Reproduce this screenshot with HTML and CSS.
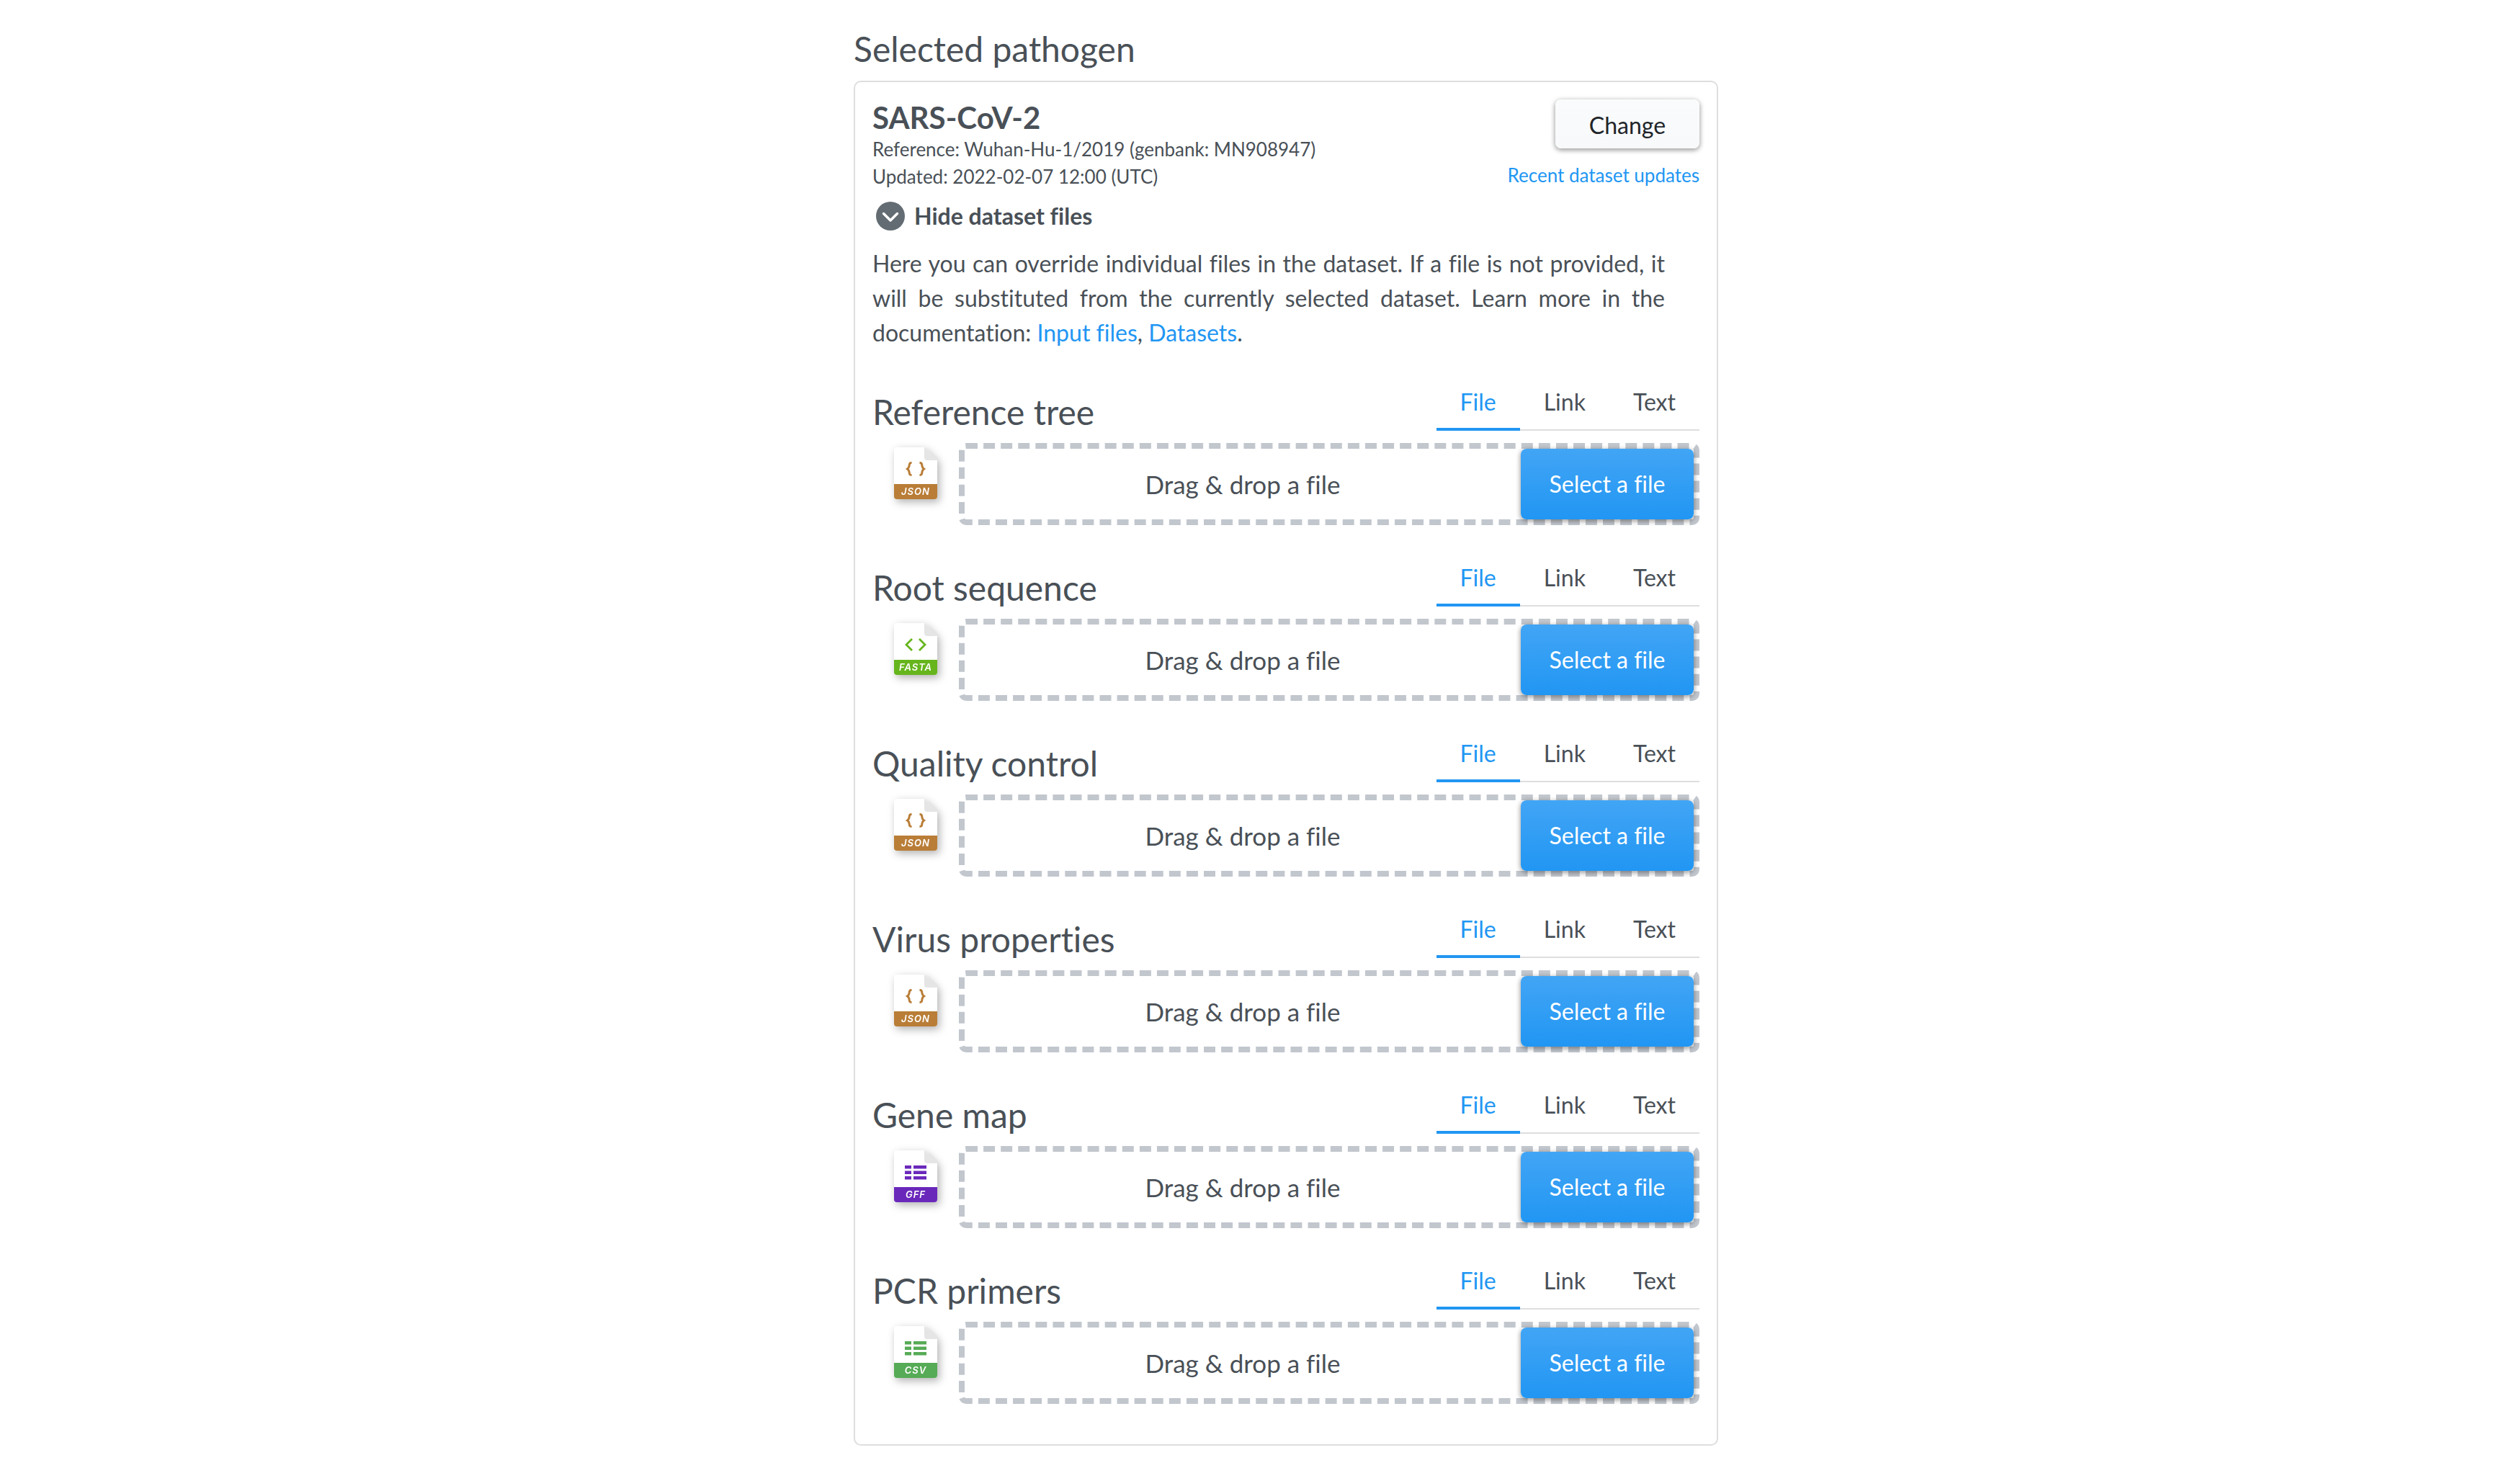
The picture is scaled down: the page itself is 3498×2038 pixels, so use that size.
FILE: index.html
```html
<!DOCTYPE html>
<html lang="en">
<head>
<meta charset="utf-8">
<title>Selected pathogen</title>
<link rel="stylesheet" href="styles.css">
<script src="app.js" defer></script>
</head>
<body>
<main class="page">
  <h1 class="page-title">Selected pathogen</h1>
  <section class="card">
    <header class="dataset">
      <div class="dataset-info">
        <h2 class="dataset-name">SARS-CoV-2</h2>
        <p class="dataset-meta">Reference: Wuhan-Hu-1/2019 (genbank: MN908947)</p>
        <p class="dataset-meta">Updated: 2022-02-07 12:00 (UTC)</p>
      </div>
      <div class="dataset-actions">
        <button type="button" class="btn-change">Change</button>
        <a class="updates-link" href="#updates">Recent dataset updates</a>
      </div>
    </header>
    <button type="button" class="toggle" aria-expanded="true">
      <svg class="toggle-icon" viewBox="0 0 40 40" aria-hidden="true"><circle cx="20" cy="20" r="20" fill="#636c73"/><path d="M10.500 16.500l9.500 9.500 9.500-9.500" fill="none" stroke="#fff" stroke-width="3.500" stroke-linecap="round" stroke-linejoin="round"/></svg>
      <span>Hide dataset files</span>
    </button>
    <p class="intro">Here you can override individual files in the dataset. If a file is not provided, it will be substituted from the currently selected dataset. Learn more in the documentation: <a href="#input-files">Input files</a>, <a href="#datasets">Datasets</a>.</p>
    <div class="inputs" id="inputs"></div>
  </section>
</main>
</body>
</html>
```
FILE: styles.css
```css
* {
  box-sizing: border-box;
}

body {
  margin: 0;
  background: #fff;
  color: #495057;
  font: 32px/48px Lato, "Liberation Sans", sans-serif;
  font-variant-ligatures: none;
}

h1, h2, h3, p {
  margin: 0;
}

a {
  color: #2196f3;
  text-decoration: none;
}

button {
  font: inherit;
  font-variant-ligatures: none;
  color: inherit;
  border: 0;
  background: none;
  padding: 0;
  cursor: pointer;
}

.page {
  padding: 38px 0 32px 72px;
  display: grid;
  grid-template-columns: minmax(0, 1200px);
  justify-content: center;
}

.page-title {
  font-size: 48px;
  line-height: 60px;
  font-weight: 400;
  margin-bottom: 14px;
}

.card {
  border: 2px solid #dedede;
  border-radius: 10px;
  padding: 24px 24px 56px;
}

.dataset {
  display: flex;
  justify-content: space-between;
}

.dataset-name {
  font-size: 42px;
  line-height: 50px;
  font-weight: 700;
}

.dataset-meta,
.updates-link {
  font-size: 26px;
  line-height: 38px;
}

.dataset-actions {
  display: flex;
  flex-direction: column;
  align-items: flex-end;
  gap: 18px;
}

.btn-change {
  width: 200px;
  height: 68px;
  padding-top: 4px;
  border-radius: 8px;
  color: #212529;
  background: linear-gradient(#fafbfc, #f8f9fa);
  box-shadow: 0 2px 6px 1px rgba(0, 0, 0, 0.36);
}

.toggle {
  display: flex;
  align-items: center;
  gap: 13px;
  margin: 16px 0 22px 5px;
  line-height: 40px;
  font-weight: 700;
}

.toggle-icon {
  width: 40px;
  height: 40px;
}

.intro {
  padding-right: 48px;
  margin-bottom: 32px;
  text-align: justify;
}

.inputs {
  display: grid;
  gap: 33px;
}

.input-head {
  display: flex;
  justify-content: space-between;
  align-items: flex-end;
  margin-bottom: 17px;
}

.input-title {
  font-size: 48px;
  line-height: 53px;
  font-weight: 400;
}

.tabs {
  display: flex;
}

.tab {
  padding: 16px 33px 14px;
  border-bottom: 2px solid #dedede;
}

.tab-active {
  color: #2196f3;
  padding-bottom: 12px;
  border-bottom: 4px solid #2196f3;
}

.input-body {
  display: grid;
  grid-template-columns: 120px 1fr;
}

.file-icon {
  display: block;
  width: 60px;
  height: 72px;
  margin: 6px 0 0 30px;
  overflow: visible;
  filter: drop-shadow(3px 4px 6px rgba(0, 0, 0, 0.3));
}

.file-icon text {
  font: italic 600 13px Inter, sans-serif;
  letter-spacing: 1px;
  text-anchor: middle;
  fill: #fff;
}

.dropzone {
  display: grid;
  grid-template-columns: 1fr 240px;
  align-items: center;
  min-height: 114px;
  border: 8px dashed #c2c7ce;
  border-radius: 10px;
  font-size: 35px;
  text-align: center;
}

.btn-select {
  align-self: stretch;
  border-radius: 8px;
  color: #fff;
  font-size: 32px;
  background: linear-gradient(#42a5f5, #2196f3);
  box-shadow: 0 2px 6px 1px rgba(0, 0, 0, 0.36);
}
```
FILE: app.js
```js
const glyphs = {
  braces: '<path d="M24.500 21.500c-3 0-3 1-3.500 4.500-.3 2-1 3-2.500 4 1.500 1 2.200 2 2.500 4 .5 3.500.5 4.500 3.500 4.500M35.500 21.500c3 0 3 1 3.500 4.500.3 2 1 3 2.500 4-1.500 1-2.200 2-2.500 4-.5 3.500-.5 4.500-3.500 4.500" fill="none" stroke="currentColor" stroke-width="3"/>',
  angles: '<path d="M25 22l-8 8 8 8M35 22l8 8-8 8" fill="none" stroke="currentColor" stroke-width="2.800"/>',
  rows: '<path d="M15 21h9v4.500h-9zM27 21h18v4.500H27zM15 28.500h9V33h-9zM27 28.500h18V33H27zM15 36h9v4.500h-9zM27 36h18v4.500H27z" fill="currentColor"/>',
};

const inputs = [
  ['Reference tree', 'JSON', '#b97d37', 'braces'],
  ['Root sequence', 'FASTA', '#66b51d', 'angles'],
  ['Quality control', 'JSON', '#b97d37', 'braces'],
  ['Virus properties', 'JSON', '#b97d37', 'braces'],
  ['Gene map', 'GFF', '#6a28bb', 'rows'],
  ['PCR primers', 'CSV', '#56ab56', 'rows'],
];

document.getElementById('inputs').innerHTML = inputs.map(([title, type, color, glyph]) => `
  <section class="input">
    <div class="input-head">
      <h3 class="input-title">${title}</h3>
      <div class="tabs" role="tablist" aria-label="${title}">
        <button type="button" role="tab" aria-selected="true" class="tab tab-active">File</button>
        <button type="button" role="tab" aria-selected="false" class="tab">Link</button>
        <button type="button" role="tab" aria-selected="false" class="tab">Text</button>
      </div>
    </div>
    <div class="input-body">
      <svg class="file-icon" viewBox="0 0 60 72" color="${color}">
        <path d="M4 0h38l18 18v50a4 4 0 0 1-4 4H4a4 4 0 0 1-4-4V4a4 4 0 0 1 4-4z" fill="#fff"/>
        <path d="M42 0l18 18H46a4 4 0 0 1-4-4z" fill="#e5e5e5"/>
        <path d="M0 51h60v17a4 4 0 0 1-4 4H4a4 4 0 0 1-4-4z" fill="currentColor"/>
        ${glyphs[glyph]}
        <text x="30" y="66">${type}</text>
      </svg>
      <div class="dropzone">
        <span>Drag &amp; drop a file</span>
        <button type="button" class="btn-select">Select a file</button>
      </div>
    </div>
  </section>`).join('');
```
